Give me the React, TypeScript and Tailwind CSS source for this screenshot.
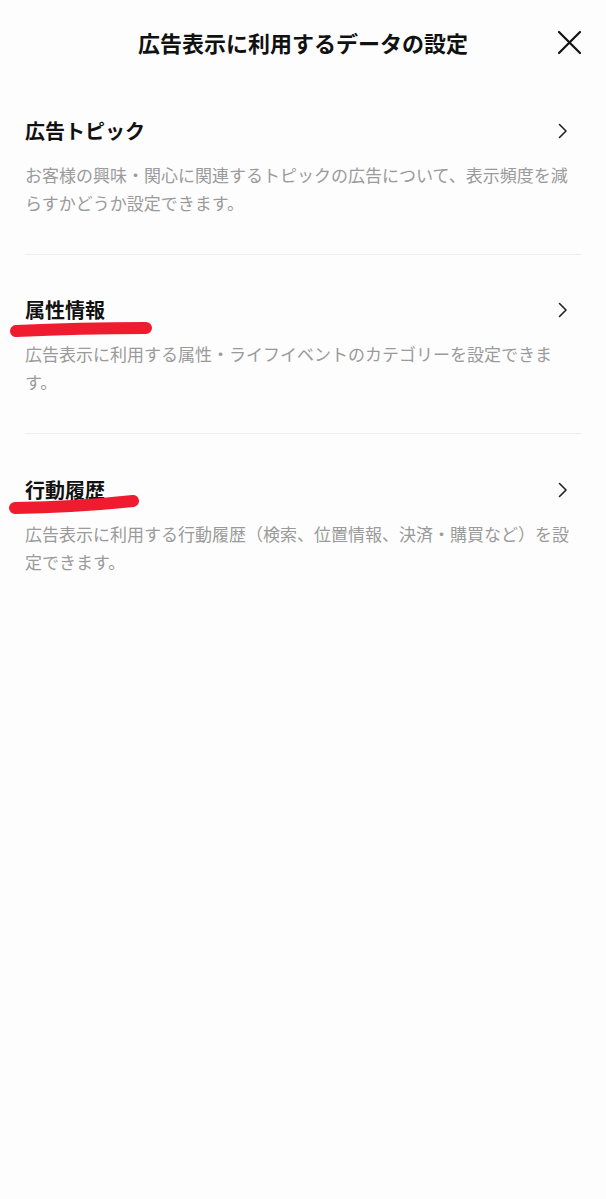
const items = [
  {
    title: "広告トピック",
    desc: "お客様の興味・関心に関連するトピックの広告について、表示頻度を減らすかどうか設定できます。",
  },
  {
    title: "属性情報",
    desc: "広告表示に利用する属性・ライフイベントのカテゴリーを設定できます。",
  },
  {
    title: "行動履歴",
    desc: "広告表示に利用する行動履歴（検索、位置情報、決済・購買など）を設定できます。",
  },
];

function Chevron() {
  return (
    <svg width="12" height="16" viewBox="0 0 12 16" fill="none" className="shrink-0">
      <path d="M2.5 1.5 L9 8 L2.5 14.5" stroke="#222" strokeWidth="1.6" strokeLinecap="round" strokeLinejoin="round" />
    </svg>
  );
}

export default function App() {
  return (
    <div
      className="relative min-h-[1199px] w-full bg-[#fdfdfd] text-[#111]"
      style={{ fontFamily: '"Noto Sans CJK JP", "Noto Sans", sans-serif' }}
    >
      <header className="relative flex h-[85px] items-center justify-center">
        <h1 className="text-[22px] font-bold">広告表示に利用するデータの設定</h1>
        <button type="button" className="absolute right-[24px] top-[30px]" aria-label="閉じる">
          <svg width="25" height="25" viewBox="0 0 25 25" fill="none">
            <path d="M2 2 L23 23 M23 2 L2 23" stroke="#111" strokeWidth="2.2" strokeLinecap="round" />
          </svg>
        </button>
      </header>

      <ul className="px-[25px]">
        {items.map((item, i) => (
          <li
            key={item.title}
            className={
              i === 0
                ? "border-b border-[#eeeeee] pt-[33px] pb-[37px]"
                : i === 1
                  ? "border-b border-[#eeeeee] pt-[42px] pb-[37px]"
                  : "pt-[43px] pb-[37px]"
            }
          >
            <div className="flex h-[26px] items-center justify-between pr-[12px]">
              <span className="text-[20px] font-bold leading-[26px]">{item.title}</span>
              <Chevron />
            </div>
            <p className="mt-[17px] text-[17px] leading-[28px] text-[#9a9a9a]">{item.desc}</p>
          </li>
        ))}
      </ul>

      <svg
        className="pointer-events-none absolute left-0 top-0"
        width="606"
        height="600"
        viewBox="0 0 606 600"
        fill="none"
      >
        <path d="M16 331 Q 80 328 146 328" stroke="#ee1c2e" strokeWidth="12" strokeLinecap="round" />
        <path d="M15 508 Q 78 507 133 501" stroke="#ee1c2e" strokeWidth="12" strokeLinecap="round" />
      </svg>
    </div>
  );
}
